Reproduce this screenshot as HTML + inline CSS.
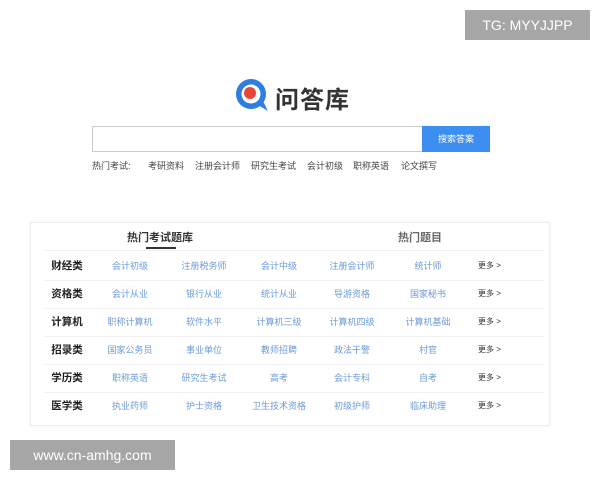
<!DOCTYPE html>
<html><head><meta charset="utf-8"><style>
*{margin:0;padding:0;box-sizing:border-box}
body{width:600px;height:480px;background:#fff;position:relative;overflow:hidden;font-family:"Liberation Sans","Noto Sans CJK SC",sans-serif}
.a{position:absolute}
.tg{left:465px;top:10px;width:125px;height:30px;background:#a6a6a6;color:#fff;font-size:14px;line-height:30px;text-align:center}
.wm{left:10px;top:440px;width:165px;height:30px;background:#a6a6a6;color:#fff;font-size:14px;line-height:30px;text-align:center}
.logo{left:275px;top:80px;font-size:24px;font-weight:bold;color:#333;letter-spacing:1px}
.inp{left:92px;top:126px;width:331px;height:26px;border:1px solid #ccc;border-right:none}
.btn{left:422px;top:126px;width:68px;height:26px;background:#3c8ef0;color:#fff;font-size:9px;line-height:26px;text-align:center}
.hot{top:159px;font-size:9px;color:#444;white-space:nowrap}
.card{left:30px;top:222px;width:520px;height:204px;border:1px solid #eee;box-shadow:0 0 3px #eee}
.t1{left:127px;top:229px;font-size:11px;font-weight:bold;color:#333}
.ul{left:146px;top:247px;width:30px;height:2px;background:#333}
.t2{left:398px;top:229px;font-size:11px;font-weight:bold;color:#666}
.hl{left:44px;top:250px;width:500px;height:1px;background:#f0f0f0}
.row{position:absolute;left:30px;width:500px;height:28px;font-size:9px;color:#6b9bd8}
.row div{position:absolute;top:0;line-height:28px;transform:translateX(-50%);white-space:nowrap}
.row .c{color:#222;font-size:10.5px;font-weight:bold}
.row .m{color:#333;font-size:8px;transform:none}
.line{position:absolute;left:44px;width:500px;height:1px;background:#f2f2f2}
</style></head><body>
<div class="a tg">TG: MYYJJPP</div>
<svg class="a" style="left:234px;top:77px" width="36" height="36" viewBox="0 0 36 36"><circle cx="17" cy="17" r="15" fill="#2f7de0"/><path d="M24 28 L34 34 L29 24 Z" fill="#2f7de0"/><circle cx="17" cy="17" r="9.5" fill="#fff"/><circle cx="16" cy="16" r="6" fill="#e9453c"/></svg>
<div class="a logo">问答库</div>
<div class="a inp"></div>
<div class="a btn">搜索答案</div>
<div class="a hot" style="left:92px">热门考试:</div>
<div class="a hot" style="left:148px">考研资料</div>
<div class="a hot" style="left:195px">注册会计师</div>
<div class="a hot" style="left:251px">研究生考试</div>
<div class="a hot" style="left:307px">会计初级</div>
<div class="a hot" style="left:353px">职称英语</div>
<div class="a hot" style="left:401px">论文撰写</div>
<div class="a card"></div>
<div class="a t1">热门考试题库</div>
<div class="a ul"></div>
<div class="a t2">热门题目</div>
<div class="a hl"></div>
<div class="row" style="top:252px"><div class="c" style="left:37px">财经类</div><div style="left:100px">会计初级</div><div style="left:174px">注册税务师</div><div style="left:249px">会计中级</div><div style="left:322px">注册会计师</div><div style="left:398px">统计师</div><div class="m" style="left:448px">更多 &gt;</div></div>
<div class="line" style="top:280px"></div>
<div class="row" style="top:280px"><div class="c" style="left:37px">资格类</div><div style="left:100px">会计从业</div><div style="left:174px">银行从业</div><div style="left:249px">统计从业</div><div style="left:322px">导游资格</div><div style="left:398px">国家秘书</div><div class="m" style="left:448px">更多 &gt;</div></div>
<div class="line" style="top:308px"></div>
<div class="row" style="top:308px"><div class="c" style="left:37px">计算机</div><div style="left:100px">职称计算机</div><div style="left:174px">软件水平</div><div style="left:249px">计算机三级</div><div style="left:322px">计算机四级</div><div style="left:398px">计算机基础</div><div class="m" style="left:448px">更多 &gt;</div></div>
<div class="line" style="top:336px"></div>
<div class="row" style="top:336px"><div class="c" style="left:37px">招录类</div><div style="left:100px">国家公务员</div><div style="left:174px">事业单位</div><div style="left:249px">教师招聘</div><div style="left:322px">政法干警</div><div style="left:398px">村官</div><div class="m" style="left:448px">更多 &gt;</div></div>
<div class="line" style="top:364px"></div>
<div class="row" style="top:364px"><div class="c" style="left:37px">学历类</div><div style="left:100px">职称英语</div><div style="left:174px">研究生考试</div><div style="left:249px">高考</div><div style="left:322px">会计专科</div><div style="left:398px">自考</div><div class="m" style="left:448px">更多 &gt;</div></div>
<div class="line" style="top:392px"></div>
<div class="row" style="top:392px"><div class="c" style="left:37px">医学类</div><div style="left:100px">执业药师</div><div style="left:174px">护士资格</div><div style="left:249px">卫生技术资格</div><div style="left:322px">初级护师</div><div style="left:398px">临床助理</div><div class="m" style="left:448px">更多 &gt;</div></div>
<div class="a wm">www.cn-amhg.com</div>
</body></html>
